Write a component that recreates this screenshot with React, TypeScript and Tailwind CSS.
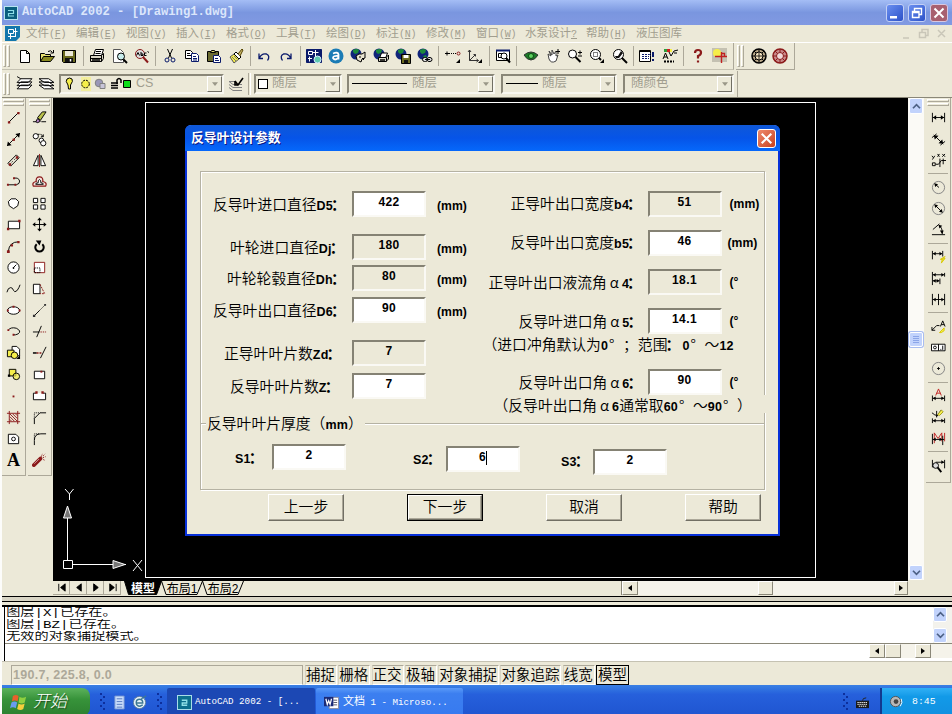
import type { ReactNode } from 'react'
import clsx from 'clsx'

const R = '#8b1a1a'
const Y = '#f5ee4a'
const G = '#808080'
const N = '#0a1a6b'

const globe = (
  <>
    <circle cx="6" cy="6" r="5.5" fill="#10247a" stroke="none" />
    <path d="M3 2q4-2 6 0l-1 3-3 1-2-2zM6 8l3-1 1 3-2 1z" fill="#1c8a3c" stroke="none" />
  </>
)

// All glyphs are drawn on a 16x16 grid
const ICONS: Record<string, ReactNode> = {
  // standard toolbar
  new: <path d="M3.5 2.5h6l3 3v9h-9zM9.5 2.5v3h3" fill="#fff" />,
  open: (
    <>
      <path d="M1.5 13.5v-8h4l1 1h5v2" fill="#e6e070" />
      <path d="M1.5 13.5l3-5h11l-4 5z" fill="#8a8a20" />
      <path d="M9 3.5q3-2 4.500 1M14.500 2v3h-3" />
    </>
  ),
  save: (
    <>
      <path d="M1.500 2.500h13v12h-12l-1-1z" fill="#6b6b20" />
      <path d="M4 3h8v5H4z" fill="#ece9d8" stroke="none" />
      <path d="M4 10h8v4H4z" fill="#111" stroke="none" />
      <path d="M9.500 11v2.500" stroke="#fff" strokeWidth="1.500" />
    </>
  ),
  print: (
    <>
      <path d="M4.500 7.500l2-6h8l-2 6" fill="#fff" />
      <path d="M7 3.500h5M6.500 5.500h5" />
      <path d="M1.500 7.500h11v6h-11zM12.500 7.500l2-2v5l-2 3M1.500 10.500h11" fill="#d8d5c5" />
      <path d="M3 12h8" strokeWidth="1.500" />
    </>
  ),
  preview: (
    <>
      <path d="M1.500 1.500h7l3 3v10h-10z" fill="#fff" stroke="#555" />
      <circle cx="9" cy="8.500" r="3.500" fill="#c8ecec" />
      <path d="M11.500 11.500l3.500 3.500" strokeWidth="2" />
    </>
  ),
  find: (
    <>
      <circle cx="6" cy="6" r="4.500" fill="#ddd" stroke={R} />
      <path d="M9 9l5 5.500" stroke={R} strokeWidth="2" />
      <path d="M2.500 7.500l1.500-3 1.500 3M7 4v3.500h2V6H7M12.500 5h-2v2.500h2M13.500 3.500l1.500 1" />
    </>
  ),
  cut: (
    <>
      <path d="M5.500 1l4 9M10.500 1l-4 9" />
      <circle cx="5" cy="12" r="2" stroke={N} />
      <circle cx="11" cy="12" r="2" stroke={N} />
    </>
  ),
  copyclip: (
    <>
      <path d="M1.500 2.500h5l2 2v6h-7z" fill="#fff" />
      <path d="M3 5.500h3M3 7.500h4" />
      <path d="M7.500 5.500h5l2 2v6h-7z" fill="#fff" stroke={N} />
      <path d="M9 8.500h3M9 10.500h4M9 12h4" stroke={N} />
    </>
  ),
  paste: (
    <>
      <path d="M1.500 3.500h11v10h-11z" fill="#6b6b30" />
      <path d="M4.500 4.500l1-2h3l1 2z" fill="#e6e070" />
      <path d="M7.500 7.500h5l2 2v5h-7z" fill="#fff" stroke={N} />
      <path d="M9 10.500h3M9 12.500h4" stroke={N} />
    </>
  ),
  match: (
    <>
      <path d="M2 9l4-3 5 5-5 4z" fill={Y} stroke="#555" />
      <path d="M6 6l2-2 5 5-2 2z" fill="#fff" />
      <path d="M10 6l4-5 1 1-3 6" fill="#c9b76a" stroke="#554400" />
      <path d="M4 9l4 4M6 8l3 3" stroke="#777" />
    </>
  ),
  undo: <path d="M3 5.500v5h4M3.500 10q2-5 7-4 4 2 1 6.500" stroke={N} strokeWidth="1.300" />,
  redo: <path d="M13 5.500v5H9M12.500 10q-2-5-7-4-4 2-1 6.500" stroke={N} strokeWidth="1.300" />,
  today: (
    <>
      <path d="M.5 1.500h15v13H.5z" fill={N} stroke={N} />
      <path d="M2.500 3.500h4v3h-4zM6.500 4.500h6M9.500 2v7M3.500 8.500v5M2 10.500h4" stroke="#fff" />
      <circle cx="11.500" cy="11.500" r="3.500" fill="#5fc8b0" stroke="#d8f0ff" />
    </>
  ),
  point_a: (
    <>
      <circle cx="8" cy="8" r="7.500" fill="#1a7bb5" stroke="none" />
      <path d="M5 5.500q5-2 5.500 1v5M10 8q-5-.5-5 2 2 3 5 0" stroke="#fff" strokeWidth="1.800" />
    </>
  ),
  globe_meet: (
    <>
      {globe}
      <path d="M6 8q3-3 6-2l3-2v6l-3 1-1 3-4-2z" fill="#e8e4d0" />
      <path d="M10 8v2M12 10l2 2" />
    </>
  ),
  globe_print: (
    <>
      {globe}
      <path d="M7 9l1.500-4h6L13 9" fill="#fff" />
      <path d="M5.500 9.500h8v4h-8zM13.500 9l2-2v4l-2 2" fill="#d8d5c5" />
      <path d="M7 12h5" strokeWidth="1.500" />
    </>
  ),
  globe_save: (
    <>
      {globe}
      <path d="M6.500 6.500h9v9h-9z" fill="#6b6b20" />
      <path d="M8.500 7h5v3h-5z" fill="#fff" stroke="none" />
      <path d="M9 12h4v3H9z" fill="#111" stroke="none" />
    </>
  ),
  globe_link: (
    <>
      {globe}
      <rect x="5.500" y="9.500" width="5" height="4" rx="2" fill="#ddd" />
      <rect x="10" y="9.500" width="5" height="4" rx="2" fill="#ddd" />
      <path d="M8 11.500h5" />
    </>
  ),
  track: (
    <>
      <path d="M0 5.500h4M2 3.500v4" />
      <path d="M4 5.500h8" strokeDasharray="1 1" />
      <circle cx="13.500" cy="5.500" r="1.500" stroke={R} />
      <path d="M15 11v4h-4z" fill="#000" stroke="none" />
    </>
  ),
  ucs: (
    <>
      <path d="M2.500 2v10.500h9M2.500 12.500l6-6M1 4l1.500-2L4 4M9.500 11l2 1.500-2 1.500M6.500 6.500h2v2" stroke="#333" />
      <path d="M15 11v4h-4z" fill="#000" stroke="none" />
    </>
  ),
  aerial: (
    <>
      <path d="M1.500 2.500h13v10h-13z" fill="#fff" />
      <path d="M1 2.500h14" strokeWidth="2" stroke={N} />
      <path d="M3.500 5.500h6v4h-6z" />
      <circle cx="9" cy="8" r="3" fill="#fff" />
      <path d="M11 10l4 4.500" strokeWidth="2" />
    </>
  ),
  eye: (
    <>
      <path d="M1 7q7-6 14 0-3 5-7 5T1 7z" fill="#1c7a28" stroke="#333" />
      <circle cx="8" cy="8" r="2.500" fill="#5ed060" stroke="#0b4a12" />
    </>
  ),
  pan: (
    <>
      <path d="M3 6l3 2-2-5 3 4V2l2 4 2-3v5l2-1-2 6q-5 3-7-2z" fill="#fff" stroke="#444" />
      <path d="M11 3.500h4M13 1v5" />
    </>
  ),
  zoomrt: (
    <>
      <circle cx="5.500" cy="6" r="4" fill="#fff" />
      <path d="M8.500 9l5 5" strokeWidth="2" />
      <path d="M11 4.500h4M13 2.500v4M11 8h4" />
    </>
  ),
  zoomwin: (
    <>
      <circle cx="6.500" cy="6.500" r="5" fill="#fff" />
      <path d="M4.500 4.500h4v4h-4z" strokeDasharray="1 1" />
      <path d="M10 10l2 2" strokeWidth="2" />
      <path d="M15 11v4h-4z" fill="#000" stroke="none" />
    </>
  ),
  zoomprev: (
    <>
      <circle cx="6.500" cy="6.500" r="5" fill="#fff" />
      <path d="M3 8h3l3-5 2 2-4 5H4z" fill="#111" stroke="none" />
      <path d="M10 10l5 5" strokeWidth="2" />
    </>
  ),
  props: (
    <>
      <path d="M.5 2.500h11v11H.5z" fill="#fff" />
      <path d="M1 3h10" strokeWidth="2" />
      <path d="M3 6.500h7M3 8.500h7M3 10.500h7" strokeDasharray="2 1" stroke={N} />
      <path d="M14 4v5M14 11v2" stroke={N} strokeWidth="2" />
      <path d="M12 5l-1.500 1.500L12 8" stroke={N} />
    </>
  ),
  dbconn: (
    <>
      <path d="M2 1h3v3H2z" fill="#2ba03a" stroke="none" />
      <path d="M5 1h3v3H5z" fill="#d02020" stroke="none" />
      <path d="M8 1h2v3H8z" fill={Y} stroke="none" />
      <path d="M1 11l2.500-6L6 11M2 9h3M7 4l2 4 3-5 4-1M12 5h3" />
      <path d="M2 13.500h10" strokeWidth="2" strokeDasharray="2 1" />
    </>
  ),
  help: (
    <>
      <path d="M5 5q0-3 3-3t3 2.500Q11 7 8 8v2.500" stroke={R} strokeWidth="2.200" />
      <path d="M8 12.500v2" stroke={R} strokeWidth="2.200" />
    </>
  ),
  active: (
    <>
      <path d="M0 0h15v14H0z" fill="#c4c1b2" stroke="none" />
      <circle cx="5" cy="5" r="4" fill={Y} stroke="none" />
      <path d="M3 8.500h12M9.500 4v11M9.500 5.500h3v3" stroke="#c02020" strokeWidth="1.400" />
    </>
  ),
  pump: (
    <>
      <circle cx="8" cy="8" r="7" fill="#b9a889" strokeWidth="1.500" />
      <circle cx="8" cy="8" r="4" fill="#f3e3c0" />
      <path d="M8 4.500v7M4.500 8h7" strokeWidth=".8" />
      <path d="M8 1v3M8 12v3M1 8h3M12 8h3M3 3l2 2M13 3l-2 2M3 13l2-2M13 13l-2-2" />
    </>
  ),
  pump2: (
    <>
      <circle cx="8" cy="8" r="7" fill="#c98a8a" stroke={R} strokeWidth="1.500" />
      <circle cx="8" cy="8" r="3.500" fill="#f0d8d8" stroke={R} />
      <path d="M8 1v3M8 12v3M1 8h3M12 8h3M3 3l2.500 2.500M13 3l-2.500 2.500M3 13l2.500-2.500M13 13l-2.500-2.500" stroke={R} />
    </>
  ),
  // layers
  layers: <path d="M4.500 9.500H15l-3.500 3.500H1zM4.500 6.500H15L11.500 10H1zM4.500 3.500H15L11.500 7H1zM1 1.500l3.500 2" fill="#fff" strokeWidth=".9" />,
  layers2: <path d="M1 9.500h9l5 3.500H6zM1 6.500h9l5 3.500H6zM1 3.500h9L15 7H6z" fill="#fff" strokeWidth=".9" />,
  layerprev: (
    <>
      <path d="M1 5.500l4 3h9M1 8.500l4 3h9M1 11.500l4 3h9M1 5.500h6" stroke={G} />
      <path d="M7 5l3 4 5-7M7 5v4h3" strokeWidth="1.600" />
    </>
  ),
  // draw
  line: (
    <>
      <path d="M3 13L13 3" />
      <path d="M2 12h2.500v2.500H2zM12 2h2.500v2.500H12z" fill={R} stroke="none" />
    </>
  ),
  xline: (
    <>
      <path d="M1.500 14.500l13-13" />
      <path d="M1 15l1-5 4 4zM15 1l-1 5-4-4z" fill="#000" stroke="none" />
      <path d="M7 7h2.500v2.500H7z" fill={R} stroke="none" />
    </>
  ),
  mline: (
    <>
      <path d="M2 11l9-9M5 14l9-9M2 11l3 3M11 2l3 3" />
      <path d="M5 11l6-6" strokeDasharray="1 1.500" />
      <path d="M3 11h2.500v2.500H3zM10.500 3.500H13V6h-2.500z" fill={R} stroke="none" />
    </>
  ),
  pline: (
    <>
      <path d="M2 11.500h9q4-1 3.500-4-1-4-6-3" />
      <path d="M1 10.500h2v2H1zM9 10.500h2v2H9zM7.500 3.500h2v2h-2z" fill={R} stroke="none" />
    </>
  ),
  polygon: <path d="M5.500 3h5l3 3-1 4.500-4.500 3-4.500-3-1-4.500z" fill="#fff" />,
  rect: (
    <>
      <path d="M2.500 4.500h12v8h-12z" fill="#fff" />
      <path d="M1 11.500h2.500V14H1zM13 3h2.500v2.500H13z" fill={R} stroke="none" />
    </>
  ),
  arc: (
    <>
      <path d="M2.500 13q1-10 11-10" />
      <path d="M1 12h3v3H1zM5 5.500h2.500V8H5zM12 2h2.500v2.500H12z" fill={R} stroke="none" />
    </>
  ),
  circle: (
    <>
      <circle cx="8" cy="8" r="6" fill="#fff" />
      <path d="M8 8l3-3M8 7.500v2M7 8.500h2" />
    </>
  ),
  spline: <path d="M1 12q1-5 4-5 2 0 3 3t4 0q2-3 3-6" />,
  ellipse: (
    <>
      <ellipse cx="8" cy="8" rx="6.500" ry="4" fill="#fff" />
      <path d="M1 7h2v2H1zM13.500 7h2v2h-2zM7 3h2v2H7z" fill={R} stroke="none" />
    </>
  ),
  earc: (
    <>
      <path d="M2.500 6.500Q5 3 11 4.500q6 3 2 6-3 1.500-5 1" />
      <path d="M1.500 5.500h2v2h-2zM7 10.500h2v2H7z" fill={R} stroke="none" />
    </>
  ),
  insert: (
    <>
      <path d="M6.500 1.500h5l3 3v7h-8z" fill="#fff" />
      <path d="M1.500 5.500h7v7h-7z" fill={Y} />
      <circle cx="9" cy="11" r="3.500" fill={Y} />
      <path d="M15 11v4h-4z" fill="#000" stroke="none" />
    </>
  ),
  block: (
    <>
      <path d="M3.500 2.500h7v7h-7z" fill={Y} />
      <circle cx="11" cy="10" r="3.500" fill={Y} fillOpacity=".7" />
      <path d="M2 8h2.500v2.500H2z" fill="#000" stroke="none" />
    </>
  ),
  point: <path d="M7 8h2v2H7z" fill={R} stroke="none" />,
  hatch: <path d="M3.500 1v14M12.500 1v14M1 3.500h14M1 12.500h14M4 4l8 8M4 7l5 5M7 4l5 5M4 10l2 2M10 4l2 2" stroke={R} />,
  region: (
    <>
      <path d="M2.500 3.500h8l3 3v7h-11z" fill="#fff" />
      <circle cx="8" cy="8.500" r="2" />
    </>
  ),
  // modify
  erase: (
    <>
      <path d="M1 12.500h5M10 12.500h5" />
      <path d="M6 9l3 3-3 1.500-2-1z" fill="#b080c0" />
      <path d="M6 8l5-6h4L9 11z" fill="#b9c04a" />
    </>
  ),
  copy: (
    <>
      <circle cx="4" cy="4.500" r="2.800" fill="#fff" />
      <path d="M6 2.500h2M9 2l3 3M12 2.500V5H9.500" />
      <circle cx="10" cy="9" r="2.500" fill="#fff" />
      <circle cx="12" cy="12" r="2.800" fill="#fff" />
    </>
  ),
  mirror: (
    <>
      <path d="M6.500 2.500v11h-5zM9.500 2.500v11h5z" fill="#fff" />
      <path d="M8 1v14" stroke={R} />
    </>
  ),
  offset: (
    <>
      <path d="M1.500 13q-2-4 3-5Q4 3 8 3t3.500 5q5 1 3 5z" stroke={R} fill="#f5e4de" strokeWidth="1.300" />
      <path d="M4 11q0-2 2.500-1.500Q6.500 6 8 6t1.500 3.500Q12 9 12 11z" fill="#fff" />
    </>
  ),
  array: <path d="M1.500 2.500h4.500v4.500H1.500zM9.500 2.500h4.500v4.500H9.500zM1.500 9.500h4.500v4.500H1.500zM9.500 9.500h4.500v4.500H9.500z" fill="#fff" />,
  move: (
    <>
      <path d="M8 2v12M2 8h12" />
      <path d="M8 .5l2.500 3h-5zM8 15.500l2.500-3h-5zM.5 8l3-2.500v5zM15.500 8l-3-2.500v5z" fill="#000" stroke="none" />
    </>
  ),
  rotate: (
    <>
      <path d="M5 5.500a4.500 4.500 0 1 0 6 0" strokeWidth="2.200" />
      <path d="M4 1.500h6L8 7z" fill="#000" stroke="none" />
    </>
  ),
  scale: (
    <>
      <path d="M2.500 2.500h11v11h-11z" fill="#fff" stroke={R} />
      <path d="M2.500 8.500h6v5h-6z" strokeDasharray="1.500 1" />
    </>
  ),
  stretch: (
    <>
      <path d="M1.500 3.500h7v10h-7z" fill="#fff" />
      <path d="M8.500 3.500l5 10h-5" stroke={R} strokeDasharray="2 1" />
    </>
  ),
  lengthen: (
    <>
      <path d="M2.500 13.500L8 8" />
      <path d="M8 8l6-6" strokeDasharray="1.500 1.500" />
      <path d="M1 12.500h2.500V15H1zM13 1h2v2h-2z" fill="#333" stroke="none" />
    </>
  ),
  trim: (
    <>
      <path d="M1 8.500h7M5 14l5-12" />
      <path d="M9 8.500h6" stroke={R} strokeDasharray="1.500 1" />
    </>
  ),
  extend: (
    <>
      <path d="M9 14l6-12" />
      <path d="M1 8.500h4" strokeWidth="1.600" />
      <path d="M5 8.500h6" stroke={R} strokeDasharray="2 1" strokeWidth="1.400" />
    </>
  ),
  breakpt: (
    <>
      <path d="M2.500 4.500h11v8h-11z" fill="#fff" />
      <path d="M9 4h2v2H9z" fill={R} stroke="none" />
    </>
  ),
  break: (
    <>
      <path d="M4.500 5.500h-3v7h13v-7h-3" fill="#fff" />
      <path d="M3.500 3.500h2.500V6H3.500zM10 3.500h2.500V6H10z" fill={R} stroke="none" />
    </>
  ),
  chamfer: (
    <>
      <path d="M2.500 15V9l6-6H15" />
      <path d="M2.500 9V3h6" strokeDasharray="1 1" />
    </>
  ),
  fillet: (
    <>
      <path d="M2.500 15v-5q0-7 7-7H15" />
      <path d="M2.500 9V3h6" strokeDasharray="1 1" />
    </>
  ),
  explode: (
    <>
      <path d="M2 14l7-7" stroke={R} strokeWidth="4" strokeLinecap="round" />
      <path d="M2.500 12.500l5-5" stroke="#d0a0a0" />
      <path d="M10 5l1-3M11.500 6l3-1M12 8l2 1M12 4l2-2" strokeDasharray="1.500 1" stroke={R} />
    </>
  ),
  // dimension
  dlin: (
    <>
      <path d="M1.500 3v10M14.500 3v10M2 8h12" />
      <path d="M2 8l3.500-2.500v5zM14 8l-3.500-2.500v5z" fill="#000" stroke="none" />
    </>
  ),
  dalign: (
    <>
      <path d="M1 6l5-4M10 14l5-4M3 3l10 10" />
      <path d="M3 3.500l5 .5-4 4zM13 12.500l-5-.5 4-4z" fill="#000" stroke="none" />
    </>
  ),
  dord: <path d="M1 3l1.500 2M4 3L1.500 7M1.500 10.500h3v3h-3zM5 12h3l3-4h5M7 1l2 3M9 1L7 4M12 1l3 3M15 1l-3 3M9.500 6v9M13 6v6" />,
  drad: (
    <>
      <circle cx="8" cy="8" r="6.500" stroke={G} />
      <path d="M4 4l4.500 4" />
      <path d="M3.500 3.500l4 1-3 3z" fill="#000" stroke="none" />
    </>
  ),
  ddia: (
    <>
      <circle cx="8" cy="8" r="6.500" stroke={G} />
      <path d="M4 4l8 8" />
      <path d="M3.500 3.500l4 1-3 3zM12.500 12.500l-4-1 3-3z" fill="#000" stroke="none" />
    </>
  ),
  dang: (
    <>
      <path d="M1 13.500h14M2 8l7-6M8.500 3.500q4 3 3.500 9" />
      <path d="M8 3l4 1-3 3zM12 13l-2.500-4h4z" fill="#000" stroke="none" />
    </>
  ),
  dquick: (
    <>
      <path d="M1.500 2v9M12.500 2v6M2 5h10" />
      <path d="M2 5l3-2v4zM12 5L9 3v4z" fill="#000" stroke="none" />
      <path d="M11 15l4-5-3 1 3-3-5 3 2 .5z" fill={Y} stroke="#d8c800" />
    </>
  ),
  dbase: (
    <>
      <path d="M1.500 1v14M14.500 2v4M9.500 8v6M2 4h12M2 10.500h7" />
      <path d="M2 4l3-2v4zM14 4l-3-2v4zM2 10.500l3-2v4zM9 10.500l-3-2v4z" fill="#000" stroke="none" />
    </>
  ),
  dcont: (
    <>
      <path d="M1.500 2v12M8 2v12M14.500 2v12M2 8h12" />
      <path d="M2 8l3-2v4zM14 8l-3-2v4z" fill="#000" stroke="none" />
    </>
  ),
  leader: (
    <>
      <path d="M1 12l5-5h3M10 8l2.500-6L15 8M11 6h3M1 8.500V12h3.500" />
      <path d="M9 14.500l5-5v3l-3 2z" fill={Y} stroke="#d8c800" />
    </>
  ),
  tol: (
    <>
      <path d="M.5 4.500h14.500v7H.5zM8 4.500v7" fill="#fff" />
      <circle cx="4.200" cy="8" r="1.500" />
      <path d="M10 10h1M12.500 6v4.500" />
    </>
  ),
  center: (
    <>
      <circle cx="8" cy="8" r="6.500" stroke={G} />
      <path d="M6.500 8h3M8 6.500v3" />
    </>
  ),
  dedit: (
    <>
      <path d="M5 8l3-7 3 7M6 5.500h4" stroke="#c02020" />
      <path d="M1.500 8v6M14.500 8v6M2 11h12" />
      <path d="M2 11l3-2v4zM14 11l-3-2v4z" fill="#000" stroke="none" />
    </>
  ),
  dtedit: (
    <>
      <path d="M1 4q3 3 6 3M6 9V2M6 8l5-7" />
      <path d="M7 6l4-5 2 2-4 4z" fill={Y} stroke="#a09a20" />
      <path d="M1.500 10v5M14.500 10v5M2 12.500h12" />
      <path d="M2 12.500l3-2v4zM14 12.500l-3-2v4z" fill="#000" stroke="none" />
    </>
  ),
  dupd: (
    <>
      <path d="M3.500 13V2l4 6 4-6v9M14.500 2v9" stroke="#c02020" />
      <path d="M1.500 3v11M12.500 5v10M2 9h12" />
      <path d="M2 9l3-2v4zM12 9L9 7v4z" fill="#000" stroke="none" />
    </>
  ),
  dstyle: (
    <>
      <path d="M1.500 2v8M14.500 2v9M5 4.500h9" />
      <path d="M14 4.500l-3-2v4z" fill="#000" stroke="none" />
      <circle cx="5" cy="8" r="3" fill="#ddd" />
      <path d="M7 10l4 5" strokeWidth="2" />
    </>
  ),
}

function Icon({ name, className = 'size-4' }: { name: string; className?: string }) {
  return (
    <svg viewBox="0 0 16 16" fill="none" stroke="#000" strokeWidth="1" className={clsx('shrink-0', className)}>
      {ICONS[name]}
    </svg>
  )
}

const STANDARD = [
  'new', 'open', 'save', '|', 'print', 'preview', 'find', '|', 'cut', 'copyclip', 'paste', 'match', '|',
  'undo', 'redo', '|', 'today', 'point_a', 'globe_meet', 'globe_print', 'globe_save', 'globe_link', '|',
  'track', 'ucs', '|', 'aerial', '|', 'eye', 'pan', 'zoomrt', 'zoomwin', 'zoomprev', '|',
  'props', 'dbconn', '|', 'help', 'active',
]

const DRAW = [
  'line', 'xline', 'mline', 'pline', 'polygon', 'rect', 'arc', 'circle', 'spline',
  'ellipse', 'earc', 'insert', 'block', 'point', 'hatch', 'region', 'mtext',
]

const MODIFY = [
  'erase', 'copy', 'mirror', 'offset', 'array', 'move', 'rotate', 'scale', 'stretch',
  'lengthen', 'trim', 'extend', 'breakpt', 'break', 'chamfer', 'fillet', 'explode',
]

const DIMENSION = [
  'dlin', 'dalign', 'dord', '|', 'drad', 'ddia', 'dang', '|', 'dquick', 'dbase', 'dcont', '|',
  'leader', 'tol', 'center', '|', 'dedit', 'dtedit', 'dupd', '|', 'dstyle',
]

const MENUS = [
  ['文件', 'F'], ['编辑', 'E'], ['视图', 'V'], ['插入', 'I'], ['格式', 'O'],
  ['工具', 'T'], ['绘图', 'D'], ['标注', 'N'], ['修改', 'M'], ['窗口', 'W'],
]

const CJK = "font-['Liberation_Sans','Noto_Sans_CJK_SC',sans-serif]"
const MONO = "font-['Liberation_Mono','Noto_Sans_CJK_SC',monospace]"

function Grip({ vertical = false }: { vertical?: boolean }) {
  const bar = 'border border-t-white border-l-white border-r-[#aca899] border-b-[#aca899]'
  return vertical ? (
    <div className="flex gap-px">
      <div className={clsx('w-[3px]', bar)} />
      <div className={clsx('w-[3px]', bar)} />
    </div>
  ) : (
    <div className="flex flex-col gap-px px-px">
      <div className={clsx('h-[3px]', bar)} />
      <div className={clsx('h-[3px]', bar)} />
    </div>
  )
}

function Hotkey({ k }: { k: string }) {
  return (
    <span className="text-[10px] tracking-[-0.3px]">
      (<u>{k}</u>)
    </span>
  )
}

function WindowTitle() {
  return (
    <div className="flex h-[25px] items-center bg-linear-to-b from-[#a4bdf5] via-[#7a96df] to-[#8199e2] pr-1 pl-[2px]">
      <div className="flex size-[14px] items-center justify-center border border-[#b8e4f0] bg-[#0b5f7d]">
        <svg viewBox="0 0 10 10" className="size-[10px]" fill="none" stroke="#8fe0e8" strokeWidth="1.2">
          <path d="M2 2.500h5.500v3H2.500V8h5.500" />
        </svg>
      </div>
      <span className={clsx('ml-[4px] text-[12.200px] font-bold whitespace-pre text-[#dce6fb]', MONO)}>
        AutoCAD 2002 - [Drawing1.dwg]
      </span>
      <div className="ml-auto flex gap-[4px]">
        <div className="size-[18px] rounded-[3px] border border-[#c3d0f5] bg-linear-to-br from-[#6b8ff0] to-[#2c50c8]">
          <svg viewBox="0 0 16 16"><path d="M3 11h7v2.500H3z" fill="#fff" /></svg>
        </div>
        <div className="size-[18px] rounded-[3px] border border-[#c3d0f5] bg-linear-to-br from-[#6b8ff0] to-[#2c50c8]">
          <svg viewBox="0 0 16 16" fill="none" stroke="#fff" strokeWidth="1.4">
            <path d="M5.500 6V3.500h7v6H10M3.500 6.500h6.500v6H3.500zM3.500 7.500H10" />
          </svg>
        </div>
        <div className="size-[18px] rounded-[3px] border border-[#d8c8e0] bg-[#a8606f]">
          <svg viewBox="0 0 16 16" stroke="#fff" strokeWidth="2"><path d="M3.500 3.500l9 9M12.500 3.500l-9 9" /></svg>
        </div>
      </div>
    </div>
  )
}

function MenuBar() {
  return (
    <div className={clsx('flex h-[18px] items-center border-b border-white pl-[3px] text-[11.500px] leading-none text-[#a19e8f]', MONO)}>
      <svg viewBox="0 0 16 16" className="mr-[3px] size-4" fill="none" stroke="#fff">
        <path d="M0 0h15v11l-4 4H0z" fill="#1377ac" stroke="none" />
        <path d="M3.500 3.500h5v4h-5zM8.500 5.500h4M10.500 2v8M5.500 7.500V13M3 10.500h8" />
      </svg>
      {MENUS.map(([label, k]) => (
        <div key={k} className="w-[50px] pl-[2px] whitespace-nowrap">
          {label}
          <Hotkey k={k} />
        </div>
      ))}
      <div className="w-[62px] pl-[1px] whitespace-nowrap">
        水泵设计<u className="text-[10px]">?</u>
      </div>
      <div className="w-[50px] whitespace-nowrap">
        帮助
        <Hotkey k="H" />
      </div>
      <span>液压图库</span>
      <svg viewBox="0 0 50 14" className="mr-[4px] ml-auto h-[14px] w-[50px]" fill="none" stroke="#c9c6b8" strokeWidth="1.500">
        <path d="M5 11h6M24 5V2.500h6v6h-2M21.500 5.500h6v5h-6zM40 3l7 7M47 3l-7 7" />
      </svg>
    </div>
  )
}

function StandardToolbar() {
  return (
    <div className="flex h-[27px]">
      <div className="flex border-r border-b border-[#aca899] border-b-[#c5c2b2] py-[2px] pl-px">
        <Grip vertical />
        <div className="ml-[4px] flex w-[719px] items-center">
          {STANDARD.map((name, i) =>
            name === '|' ? (
              <div key={i} className="flex w-[5.700px] shrink-0 justify-center">
                <div className="h-[20px] w-px bg-[#aca899]" />
              </div>
            ) : (
              <div key={i} className="flex w-[22.200px] shrink-0 justify-center">
                <Icon name={name} />
              </div>
            ),
          )}
        </div>
      </div>
      <div className="ml-[2px] flex border-r border-b border-[#aca899] py-[2px] pl-px">
        <Grip vertical />
        <div className="flex w-[50px] items-center gap-[5px] pl-[7px]">
          <Icon name="pump" />
          <Icon name="pump2" />
        </div>
      </div>
    </div>
  )
}

function Combo({ className, children }: { className: string; children: ReactNode }) {
  return (
    <div
      className={clsx(
        'flex h-[20px] shrink-0 items-center border-2 border-t-[#8a8778] border-r-[#f8f7f0] border-b-[#f8f7f0] border-l-[#8a8778] text-[12.500px] leading-none text-[#a19e8f]',
        CJK,
        className,
      )}
    >
      {children}
      <div className="ml-auto flex h-full w-[15px] shrink-0 items-center justify-center border border-t-white border-r-[#716f64] border-b-[#716f64] border-l-white">
        <svg viewBox="0 0 8 5" className="h-[4px] w-[6px]"><path d="M0 0h8L4 5z" fill="#9a9788" /></svg>
      </div>
    </div>
  )
}

function PropertyToolbar() {
  return (
    <div className="flex h-[28px] items-center border-b border-[#8a8778]">
      <div className="flex h-[26px] py-[2px] pl-px">
        <Grip vertical />
      </div>
      <Icon name="layers" className="ml-[6px] size-[17px]" />
      <Icon name="layers2" className="ml-[5px] size-[17px]" />
      <Combo className="ml-[4px] w-[165px]">
        <svg viewBox="0 0 68 16" className="ml-[2px] h-4 w-[68px] shrink-0" fill="none" stroke="#000">
          <path d="M5 9Q2 5 4 3q2.500-2 5 0 1.500 2-1.500 6v4H5.500z" fill={Y} />
          <path d="M18 1h10v14H18z" fill="#f3ee9c" stroke="none" />
          <circle cx="22.500" cy="8" r="3.800" fill={Y} strokeDasharray="2 1" />
          <circle cx="36" cy="7" r="3.800" fill="#9a97b8" stroke={G} />
          <path d="M37 7.500h5v5h-5z" fill="#c8c5d8" stroke={G} />
          <path d="M48 7h7M48 9.500h7M48 12h7" strokeWidth="1.600" />
          <path d="M54 8V4q2-3 4 0v3" strokeWidth="1.500" />
          <path d="M60.500 4.500h7v7h-7z" fill="#0ddd1a" />
        </svg>
        <span className="ml-[5px] text-[12.500px] font-light">CS</span>
      </Combo>
      <Icon name="layerprev" className="ml-[4px] size-4" />
      <div className="ml-[4px] h-[22px] w-[3px] border-x border-r-white border-l-[#aca899]" />
      <Combo className="ml-[3px] w-[88px]">
        <div className="mr-[4px] ml-[2px] size-[10px] border border-black bg-white" />
        随层
      </Combo>
      <Combo className="ml-[5px] w-[148px]">
        <div className="mr-[5px] ml-[3px] h-px w-[55px] bg-black" />
        随层
      </Combo>
      <Combo className="ml-[6px] w-[116px]">
        <div className="mr-[4px] ml-[3px] h-px w-[32px] bg-black" />
        随层
      </Combo>
      <Combo className="ml-[6px] w-[111px]">
        <span className="ml-[6px]">随颜色</span>
      </Combo>
      <div className="ml-[3px] h-[26px] w-px bg-[#aca899]" />
    </div>
  )
}

function SideToolbar({ names, className }: { names: string[]; className: string }) {
  return (
    <div className={clsx('flex shrink-0 flex-col border-r border-b border-[#aca899] pt-px', className)}>
      <Grip />
      <div className="flex flex-col items-center pt-[1px]">
        {names.map((name, i) => {
          if (name === '|') return <div key={i} className="flex h-[5.300px] w-[20px] items-center"><div className="h-px w-full bg-[#aca899]" /></div>
          return (
            <div key={i} className="flex h-[21.400px] items-center justify-center">
              {name === 'mtext' ? (
                <span className="font-['Liberation_Serif',serif] text-[18px] leading-none font-bold">A</span>
              ) : (
                <Icon name={name} className="size-[15px]" />
              )}
            </div>
          )
        })}
      </div>
    </div>
  )
}

function XpArrow({ up = false, className }: { up?: boolean; className?: string }) {
  return (
    <div className={clsx('flex w-[14px] shrink-0 items-center justify-center rounded-[2px] border border-white bg-[#c2d3fc]', className)}>
      <svg viewBox="0 0 10 8" className="h-[7px] w-[9px]" fill="none" stroke="#4d6185" strokeWidth="2">
        <path d={up ? 'M1 6l4-4 4 4' : 'M1 2l4 4 4-4'} />
      </svg>
    </div>
  )
}

function ClassicArrow({ right = false, className = 'w-[16px]' }: { right?: boolean; className?: string }) {
  return (
    <div className={clsx('flex h-full shrink-0 items-center justify-center border border-t-white border-r-[#8a8778] border-b-[#8a8778] border-l-white bg-[#ece9d8]', className)}>
      <svg viewBox="0 0 4 6" className="h-[6px] w-[4px]"><path d={right ? 'M0 0l4 3-4 3z' : 'M4 0L0 3l4 3z'} /></svg>
    </div>
  )
}

// Chinese glyphs stay thin, Latin letters and digits are bold like the System font.
// Alpha and the degree sign take a full-width cell.
function Mixed({ text }: { text: string }) {
  return (
    <>
      {text.split(/([\x21-\x7e]+|α|°|：)/).map((part, i) => {
        if (i % 2 === 0) return <span key={i}>{part}</span>
        if (part === 'α') return <span key={i} className="inline-block w-[15px] text-center font-['Noto_Sans_CJK_SC',sans-serif]">α</span>
        if (part === '°') return <span key={i} className="inline-block w-[15px] pl-px font-['Noto_Sans_CJK_SC',sans-serif]">°</span>
        if (part === '：') return <span key={i} className="-ml-[2px] inline-block w-[17px] font-bold">：</span>
        return <span key={i} className="text-[12.500px] font-bold tracking-[0.2px]">{part}</span>
      })}
    </>
  )
}

function Field({ value, readOnly, caret }: { value: string; readOnly?: boolean; caret?: boolean }) {
  return (
    <div
      className={clsx(
        'flex h-[26px] w-[74px] shrink-0 justify-center border-2 border-t-[#858274] border-r-[#faf9f4] border-b-[#faf9f4] border-l-[#858274] pt-[3px] text-[12px] leading-[13px] font-bold tracking-[0.4px]',
        readOnly ? 'bg-[#ece9d8]' : 'bg-white',
      )}
    >
      {value}
      {caret && <span className="h-[14px] w-px bg-black" />}
    </div>
  )
}

interface RowData {
  label: string
  value: string
  unit?: string
  readOnly?: boolean
  row: string
  pad: string
  unitPad?: string
}

const LEFT: RowData[] = [
  { label: '反导叶进口直径D5：', value: '422', unit: '(mm)', row: 'mt-[19px]', pad: 'pl-[12px]' },
  { label: '叶轮进口直径Dj：', value: '180', unit: '(mm)', readOnly: true, row: 'mt-[17px]', pad: 'pl-[29px]' },
  { label: '叶轮轮毂直径Dh：', value: '80', unit: '(mm)', readOnly: true, row: 'mt-[5px]', pad: 'pl-[26px]' },
  { label: '反导叶出口直径D6：', value: '90', unit: '(mm)', row: 'mt-[6px]', pad: 'pl-[12px]' },
  { label: '正导叶叶片数Zd：', value: '7', readOnly: true, row: 'mt-[17px]', pad: 'pl-[23px]' },
  { label: '反导叶叶片数Z：', value: '7', row: 'mt-[7px]', pad: 'pl-[29px]' },
]

const RIGHT: RowData[] = [
  { label: '正导叶出口宽度b4：', value: '51', unit: '(mm)', readOnly: true, row: 'mt-[19px]', pad: 'pl-[31px]', unitPad: 'pl-[8px]' },
  { label: '反导叶出口宽度b5：', value: '46', unit: '(mm)', row: 'mt-[13px]', pad: 'pl-[31px]', unitPad: 'pl-[6px]' },
  { label: '正导叶出口液流角α4：', value: '18.1', unit: '(°', readOnly: true, row: 'mt-[13px]', pad: 'pl-[9px]', unitPad: 'pl-[8px]' },
  { label: '反导叶进口角α5：', value: '14.1', unit: '(°', row: 'mt-[13px]', pad: 'pl-[39px]', unitPad: 'pl-[8px]' },
  { label: '反导叶出口角α6：', value: '90', unit: '(°', row: 'mt-[17px]', pad: 'pl-[39px]', unitPad: 'pl-[8px]' },
]

function ParamRow({ data, labelClass }: { data: RowData; labelClass: string }) {
  return (
    <div className={clsx('flex h-[26px]', data.row)}>
      <div className={clsx('shrink-0 whitespace-nowrap', labelClass, data.pad)}>
        <Mixed text={data.label} />
      </div>
      <Field value={data.value} readOnly={data.readOnly} />
      {data.unit && (
        <div className={clsx('text-[12.200px] font-bold', data.unitPad ? 'leading-[26px]' : 'leading-[30px]', data.unitPad ?? 'pl-[11px]')}>
          {data.unit}
        </div>
      )}
    </div>
  )
}

function DialogButton({ label, primary }: { label: string; primary?: boolean }) {
  return (
    <div className={clsx('h-[27px] w-[76px]', primary && 'border border-black')}>
      <div className="flex h-full items-center justify-center border border-t-white border-r-[#716f64] border-b-[#716f64] border-l-white shadow-[inset_-1px_-1px_0_#aca899]">
        {label}
      </div>
    </div>
  )
}

function ParamDialog() {
  return (
    <div
      className={clsx(
        'absolute top-[27px] left-[132px] flex h-[411px] w-[595px] flex-col rounded-t-[6px] border-2 border-t-0 border-[#0831d9] bg-[#ece9d8] text-[14.800px] font-[350] text-black',
        CJK,
      )}
    >
      <div className="-mx-[2px] flex h-[26px] shrink-0 items-center rounded-t-[6px] bg-linear-to-b from-[#0f58d8] via-[#0654e8] to-[#0668fb] pr-[4px] pl-[6px]">
        <span className="text-[12.800px] leading-none font-bold text-white [text-shadow:1px_1px_0_#0a1883]">反导叶设计参数</span>
        <div className="ml-auto size-[19px] rounded-[3px] border border-white bg-linear-to-br from-[#ee8a6c] to-[#c93f1c]">
          <svg viewBox="0 0 16 16" stroke="#fff" strokeWidth="2"><path d="M3.500 3.500l9 9M12.500 3.500l-9 9" /></svg>
        </div>
      </div>

      <div className="mx-[13px] mt-[20px] h-[319px] w-[565px] shrink-0 border border-[#b5b2a3] shadow-[inset_1px_1px_0_#fff,1px_1px_0_#fff]">
        <div className="flex h-[242px]">
          <div className="w-[279px]">
            {LEFT.map((r) => (
              <ParamRow key={r.label} data={r} labelClass="w-[151px] leading-[28px]" />
            ))}
          </div>
          <div className="w-[285px]">
            {RIGHT.slice(0, 4).map((r) => (
              <ParamRow key={r.label} data={r} labelClass="w-[168px] leading-[26px]" />
            ))}
            <div className="h-[18px] pl-[3px] leading-[20px] whitespace-pre">
              <Mixed text="（进口冲角默认为0°；范围：0°～12" />
            </div>
            <ParamRow data={RIGHT[4]} labelClass="w-[168px] leading-[26px]" />
            <div className="-mr-[2px] ml-[14px] h-[18px] bg-[#ece9d8] leading-[20px] whitespace-pre">
              <Mixed text="（反导叶出口角α6通常取60°～90°）" />
            </div>
          </div>
        </div>

        {/* Blade thickness */}
        <div className="flex h-[20px] items-center">
          <div className="h-[2px] w-[5px] border-t border-b border-t-[#b5b2a3] border-b-white" />
          <span className="ml-[1px] w-[158px] whitespace-nowrap">
            <Mixed text="反导叶叶片厚度（mm）" />
          </span>
          <div className="h-[2px] flex-1 border-t border-b border-t-[#b5b2a3] border-b-white" />
        </div>
        <div className="flex pl-[34px]">
          <div className="mt-[11px] w-[37px] leading-[26px] whitespace-nowrap"><Mixed text="S1：" /></div>
          <div className="mt-[10px]"><Field value="2" /></div>
          <div className="mt-[12px] ml-[67px] w-[33px] leading-[26px] whitespace-nowrap"><Mixed text="S2：" /></div>
          <div className="mt-[12px]"><Field value="6" caret /></div>
          <div className="mt-[14px] ml-[41px] w-[32px] leading-[26px] whitespace-nowrap"><Mixed text="S3：" /></div>
          <div className="mt-[15px]"><Field value="2" /></div>
        </div>
      </div>

      <div className="mt-[4px] flex gap-[63px] pl-[81px]">
        <DialogButton label="上一步" />
        <DialogButton label="下一步" primary />
        <DialogButton label="取消" />
        <DialogButton label="帮助" />
      </div>
    </div>
  )
}

function DrawingArea() {
  return (
    <div className="relative h-[483px] w-[855px] bg-black">
      <div className="absolute top-[4px] left-[92px] h-[476px] w-[671px] border border-white" />
      <svg viewBox="0 0 100 100" className="absolute top-[386px] left-0 size-[100px]" fill="none" stroke="#fff">
        <path d="M14.500 77V32M19 80.500h54M10.500 76.500h9v8h-9zM12 5l4.500 5 4-5M16.500 10v6M80 76l9 11M89 76l-9 11" />
        <path d="M14.500 22l-4 12h8zM72 80.500l-12-4v8z" fill="#777" />
      </svg>
      <ParamDialog />
    </div>
  )
}

function LayoutTab({ label, active }: { label: string; active?: boolean }) {
  return (
    <div className={clsx('relative -mr-px h-[14px] text-center leading-[13px]', active ? 'w-[38px]' : 'w-[42px]')}>
      <svg viewBox="0 0 42 14" preserveAspectRatio="none" className="absolute inset-0 h-full w-full" stroke="#000">
        <path d="M.5 0L5 13.500h31L41.500 0" fill={active ? '#000' : '#ece9d8'} />
      </svg>
      <span className={clsx('relative text-[12px]', active ? 'font-bold text-white' : 'text-black')}>{label}</span>
    </div>
  )
}

function LayoutBar() {
  const nav = ['M3 2v8M10 2L5 6l5 4z', 'M9 2L4 6l5 4z', 'M4 2l5 4-5 4z', 'M3 2l5 4-5 4zM10 2v8']
  return (
    <div className={clsx('flex h-[15px] w-[855px] items-start', CJK)}>
      {nav.map((d) => (
        <div key={d} className="flex h-[14px] w-[17px] items-center justify-center border-r border-b border-[#aca899]">
          <svg viewBox="0 0 12 12" className="size-[11px]" stroke="#000"><path d={d} /></svg>
        </div>
      ))}
      <div className="ml-[3px] flex">
        <LayoutTab label="模型" active />
        <LayoutTab label="布局1" />
        <LayoutTab label="布局2" />
      </div>
      <div className="ml-auto flex h-[14px] w-[290px] bg-[#f5f3ea]">
        <div className="w-[4px] border-r border-[#8a8778] bg-[#ece9d8]" />
        <ClassicArrow />
        <div className="w-[120px]" />
        <div className="w-[15px] border border-t-white border-r-[#8a8778] border-b-[#8a8778] border-l-white bg-[#ece9d8]" />
        <ClassicArrow right className="ml-auto w-[14px]" />
      </div>
    </div>
  )
}

const MESSAGES = ['图层|X|已存在。', '图层|BZ|已存在。', '无效的对象捕捉模式。']

function CommandWindow() {
  return (
    <div className="flex h-[57px] shrink-0 border-t-2 border-b border-black border-b-[#c5c2b2] bg-white">
      <div className="ml-[2px] flex flex-1 flex-col border-l border-black">
        <div className="flex h-[37px] border-b border-[#8a8778]">
          <div className={clsx('flex-1 origin-left scale-x-[1.2] text-[11.800px] leading-[12px] font-[350] whitespace-nowrap text-black', MONO)}>
            {MESSAGES.map((m) => (
              <div key={m} className="h-[12px] overflow-hidden pl-px">{m}</div>
            ))}
          </div>
          <div className="flex flex-col justify-between bg-[#f3f2ec] pr-[5px]">
            <XpArrow up className="h-[15px]" />
            <XpArrow className="h-[15px]" />
          </div>
        </div>
        <div className="flex flex-1 bg-white">
          <div className="ml-auto flex h-[14px] w-[83px] bg-[#f5f3ea] pr-[21px]">
            <ClassicArrow />
            <div className="w-[16px] shrink-0 border border-t-white border-r-[#8a8778] border-b-[#8a8778] border-l-white bg-[#ece9d8]" />
            <div className="w-[14px] shrink-0" />
            <ClassicArrow right />
          </div>
        </div>
      </div>
    </div>
  )
}

const MODES = ['捕捉', '栅格', '正交', '极轴', '对象捕捉', '对象追踪', '线宽', '模型']

function StatusBar() {
  return (
    <div className={clsx('flex h-[23px] shrink-0 items-end pl-[9px]', CJK)}>
      <div className="h-[20px] w-[292px] border border-[#aca899] border-b-white pl-px text-[12.500px] leading-[19px] font-bold tracking-[0.3px] text-[#aca899]">
        190.7, 225.8, 0.0
      </div>
      <div className="ml-[2px] flex h-[20px] text-[14.500px] font-[350] text-black">
        {MODES.map((m) => (
          <div
            key={m}
            className={clsx(
              'h-full border leading-[18px] whitespace-nowrap',
              m === '模型' ? 'border-black px-px' : 'mr-[1.300px] border-t-[#aca899] border-r-white border-b-white border-l-[#d5d2c2] pr-[1px]',
            )}
          >
            {m}
          </div>
        ))}
      </div>
    </div>
  )
}

function Dots() {
  return (
    <svg viewBox="0 0 5 20" className="h-[20px] w-[5px]" fill="#0d2f9c">
      <path d="M0 1h2v2H0zM3 4h2v2H3zM0 7h2v2H0zM3 10h2v2H3zM0 13h2v2H0zM3 16h2v2H3z" />
    </svg>
  )
}

function Taskbar() {
  return (
    <div className={clsx('flex h-[31px] shrink-0 items-stretch bg-linear-to-b from-[#3a80e4] via-[#2660dc] via-30% to-[#1f55d0] pt-[3px] text-[11px] text-white', MONO)}>
      <div className="flex w-[88px] items-center rounded-r-[8px] bg-linear-to-b from-[#5cb25c] via-[#37933a] via-40% to-[#2d8030] pl-[8px]">
        <svg viewBox="0 0 20 18" className="h-[17px] w-[19px]">
          <path d="M3 2q3-2 6 0L8 8Q5 6 2 8z" fill="#e8602c" />
          <path d="M10 3q3 2 7 0l-1.500 6q-3 2-6.500 0z" fill="#8fd040" />
          <path d="M1.500 9q3-2 6 0l-1.500 6q-3-2-6 0z" fill="#6a9cf0" />
          <path d="M9 10q3 2 6.500 0L14 16q-3 2-6.500 0z" fill="#f5cf3c" />
        </svg>
        <span className={clsx('ml-[4px] text-[17px] font-light italic [text-shadow:1px_1px_1px_#1c4a1c]', CJK)}>开始</span>
      </div>
      <div className="flex w-[77px] items-center pl-[10px]">
        <Dots />
        <svg viewBox="0 0 14 16" className="ml-[8px] h-[15px] w-[13px]">
          <path d="M2 1h10v14H2z" fill="#c8dcfa" stroke="#6f90cf" />
          <path d="M4 4h6M4 7h6M4 10h6M4 13h6" stroke="#5578c0" />
        </svg>
        <svg viewBox="0 0 16 16" className="ml-[6px] size-[15px]" fill="none">
          <circle cx="8" cy="8" r="6.500" fill="#e8f3fa" stroke="#5d7c9c" />
          <path d="M4.500 8.500h7q0-4-3.500-4T4.500 8q0 4 4 4l3-1.500M10 4l5-3" stroke="#3d7894" strokeWidth="1.500" />
        </svg>
        <div className="ml-[10px]"><Dots /></div>
      </div>
      <div className="flex w-[148px] items-center rounded-[2px] bg-[#1c48b4] pl-[10px]">
        <div className="flex size-[15px] items-center justify-center border border-[#a8dce8] bg-[#0b6f8d]">
          <svg viewBox="0 0 10 10" className="size-[9px]" fill="none" stroke="#8fe0e8" strokeWidth="1.500">
            <path d="M2 2.500h5.500v3H2.500V8h5.500" />
          </svg>
        </div>
        <span className="ml-[3px] text-[9.200px] whitespace-pre">AutoCAD 2002 - [...</span>
      </div>
      <div className="ml-px flex w-[147px] items-center rounded-[2px] bg-linear-to-b from-[#5a9af8] via-[#3c7ff0] via-20% to-[#377af0] pl-[8px]">
        <svg viewBox="0 0 16 16" className="size-[15px]">
          <path d="M5.500 2.500h10v12h-10z" fill="#fff" stroke="#889" />
          <path d="M10 5.500h4M10 8h4M10 10.500h4" stroke="#556" />
          <path d="M0 2h10v10H0z" fill="#1a2a78" />
          <path d="M2 4l1.500 6L5 6l1.500 4L8 4" fill="none" stroke="#fff" strokeWidth="1.300" />
        </svg>
        <span className="ml-[4px] whitespace-pre">
          文档<span className="text-[9.200px]"> 1 - Microso...</span>
        </span>
      </div>
      <div className="ml-auto flex w-[37px] items-center">
        <Dots />
        <svg viewBox="0 0 14 14" className="ml-[8px] size-[13px]">
          <path d="M0 5h14v8H0z" fill="#1a1a1a" />
          <path d="M1.500 7h11M1.500 9h11M3 11h8" stroke="#fff" strokeDasharray="1.500 .7" />
          <path d="M7 5q0-3 4-3" fill="none" stroke="#222" />
        </svg>
      </div>
      <div className="flex w-[72px] items-center border-l-2 border-[#12398f] bg-linear-to-b from-[#2fb0f5] via-[#129ae8] via-30% to-[#1290e0] pl-[7px]">
        <svg viewBox="0 0 16 16" className="size-[15px]" fill="none">
          <circle cx="7" cy="7" r="5.500" fill="#b8b8b8" stroke="#555" />
          <circle cx="7.500" cy="7" r="2.500" fill="#444" />
          <path d="M13 4q2 4-1 8" stroke="#fff" />
        </svg>
        <span className="ml-[8px] text-[9.800px]">8:45</span>
      </div>
    </div>
  )
}

export default function App() {
  return (
    <div className="flex h-[714px] w-[952px] flex-col overflow-hidden bg-[#ece9d8] text-black">
      <div className="flex flex-1 flex-col border-l-2 border-[#fcfcfa]">
        <WindowTitle />
        <MenuBar />
        <StandardToolbar />
        <PropertyToolbar />
        <div className="flex h-[498px] shrink-0">
          <div className="flex w-[51px] items-start gap-[2px]">
            <SideToolbar names={DRAW} className="h-[378px] w-[24px]" />
            <SideToolbar names={MODIFY} className="h-[378px] w-[24px]" />
          </div>
          <div className="flex flex-col">
            <DrawingArea />
            <LayoutBar />
          </div>
          <div className="flex h-[482px] w-[16px] flex-col items-center bg-[#fbfaf6]">
            <XpArrow up className="h-[16px]" />
            <div className="mt-[218px] flex h-[15px] w-[14px] flex-col justify-center gap-px rounded-[2px] border border-white bg-[#c2d3fc] px-[3px] shadow-[0_0_0_1px_#a9bdf0]">
              <div className="h-px bg-[#8ba5e8]" />
              <div className="h-px bg-[#8ba5e8]" />
              <div className="h-px bg-[#8ba5e8]" />
              <div className="h-px bg-[#8ba5e8]" />
            </div>
            <XpArrow className="mt-auto h-[15px]" />
          </div>
          <SideToolbar names={DIMENSION} className="ml-[2px] h-[385px] w-[25px]" />
        </div>
        <div className="mb-[3px] h-[6px] shrink-0 border-y border-black bg-[#d8d5c5]" />
        <CommandWindow />
        <StatusBar />
        <Taskbar />
      </div>
    </div>
  )
}
